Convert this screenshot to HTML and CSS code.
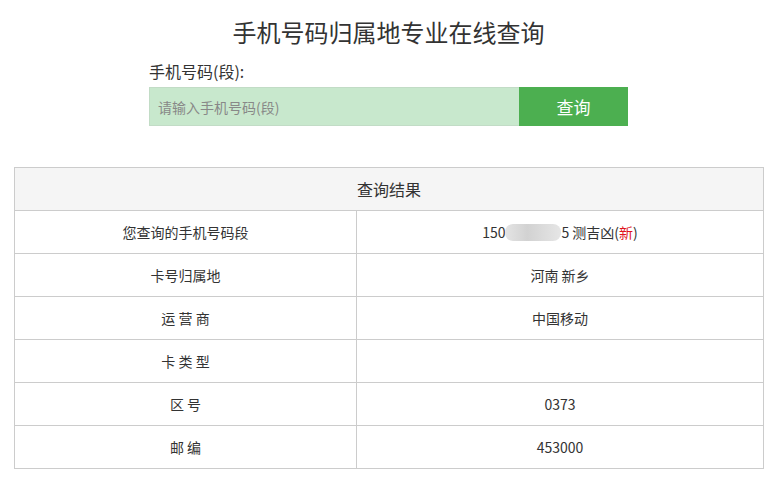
FILE: index.html
```html
<!DOCTYPE html>
<html lang="zh-CN">
<head>
<meta charset="utf-8">
<title>手机号码归属地专业在线查询</title>
<link rel="stylesheet" href="styles.css">
</head>
<body>
<div class="page">
  <h1 class="title">手机号码归属地专业在线查询</h1>
  <div class="search">
    <div class="label">手机号码(段):</div>
    <div class="form">
      <input class="input" type="text" placeholder="请输入手机号码(段)">
      <button class="btn" type="button">查询</button>
    </div>
  </div>
  <table class="result">
    <thead>
      <tr><th colspan="2">查询结果</th></tr>
    </thead>
    <tbody>
      <tr><td>您查询的手机号码段</td><td>150<span class="blur"></span>5 测吉凶(<span class="red">新</span>)</td></tr>
      <tr><td>卡号归属地</td><td>河南 新乡</td></tr>
      <tr><td>运 营 商</td><td>中国移动</td></tr>
      <tr><td>卡 类 型</td><td></td></tr>
      <tr><td>区 号</td><td>0373</td></tr>
      <tr><td>邮 编</td><td>453000</td></tr>
    </tbody>
  </table>
</div>
</body>
</html>
```

FILE: styles.css
```css
* { box-sizing: border-box; }
html, body { margin: 0; padding: 0; background: #fff; }
body {
  font-family: "Noto Sans CJK SC", "Liberation Sans", sans-serif;
  color: #333;
}
.page {
  padding: 13px 12px 0 14px;
}
.title {
  margin: 0;
  font-size: 24px;
  font-weight: 400;
  line-height: 38px;
  text-align: center;
  color: #333;
}
.search {
  width: 479px;
  margin: 10px 0 0 135px;
}
.label {
  font-size: 16px;
  line-height: 20px;
  color: #333;
}
.form {
  display: flex;
  margin-top: 6px;
  height: 39px;
}
.input {
  flex: 0 0 370px;
  height: 39px;
  border: 1px solid #c2dcc6;
  border-right: none;
  background: #c8e8cd;
  padding: 0 8px;
  font-family: inherit;
  font-size: 14px;
  color: #333;
  outline: none;
}
.input::placeholder { color: #888; }
.btn {
  flex: 0 0 109px;
  height: 39px;
  border: none;
  background: #4caf50;
  color: #fff;
  font-family: inherit;
  font-size: 17px;
  cursor: pointer;
}
.result {
  width: 750px;
  margin-top: 41px;
  border-collapse: collapse;
  font-size: 14px;
  color: #333;
}
.result th, .result td {
  border: 1px solid #ccc;
  height: 43px;
  text-align: center;
  font-weight: 400;
  padding: 0;
}
.result th {
  background: #f5f5f5;
  font-size: 16px;
}
.result td:first-child { width: 342px; }
.blur {
  display: inline-block;
  width: 56px;
  height: 17px;
  vertical-align: -3px;
  border-radius: 8px;
  background: linear-gradient(90deg, #e4e4e4, #d2d2d2 40%, #dcdcdc 70%, #e6e6e6);
}
.red { color: #e0141e; }
```
